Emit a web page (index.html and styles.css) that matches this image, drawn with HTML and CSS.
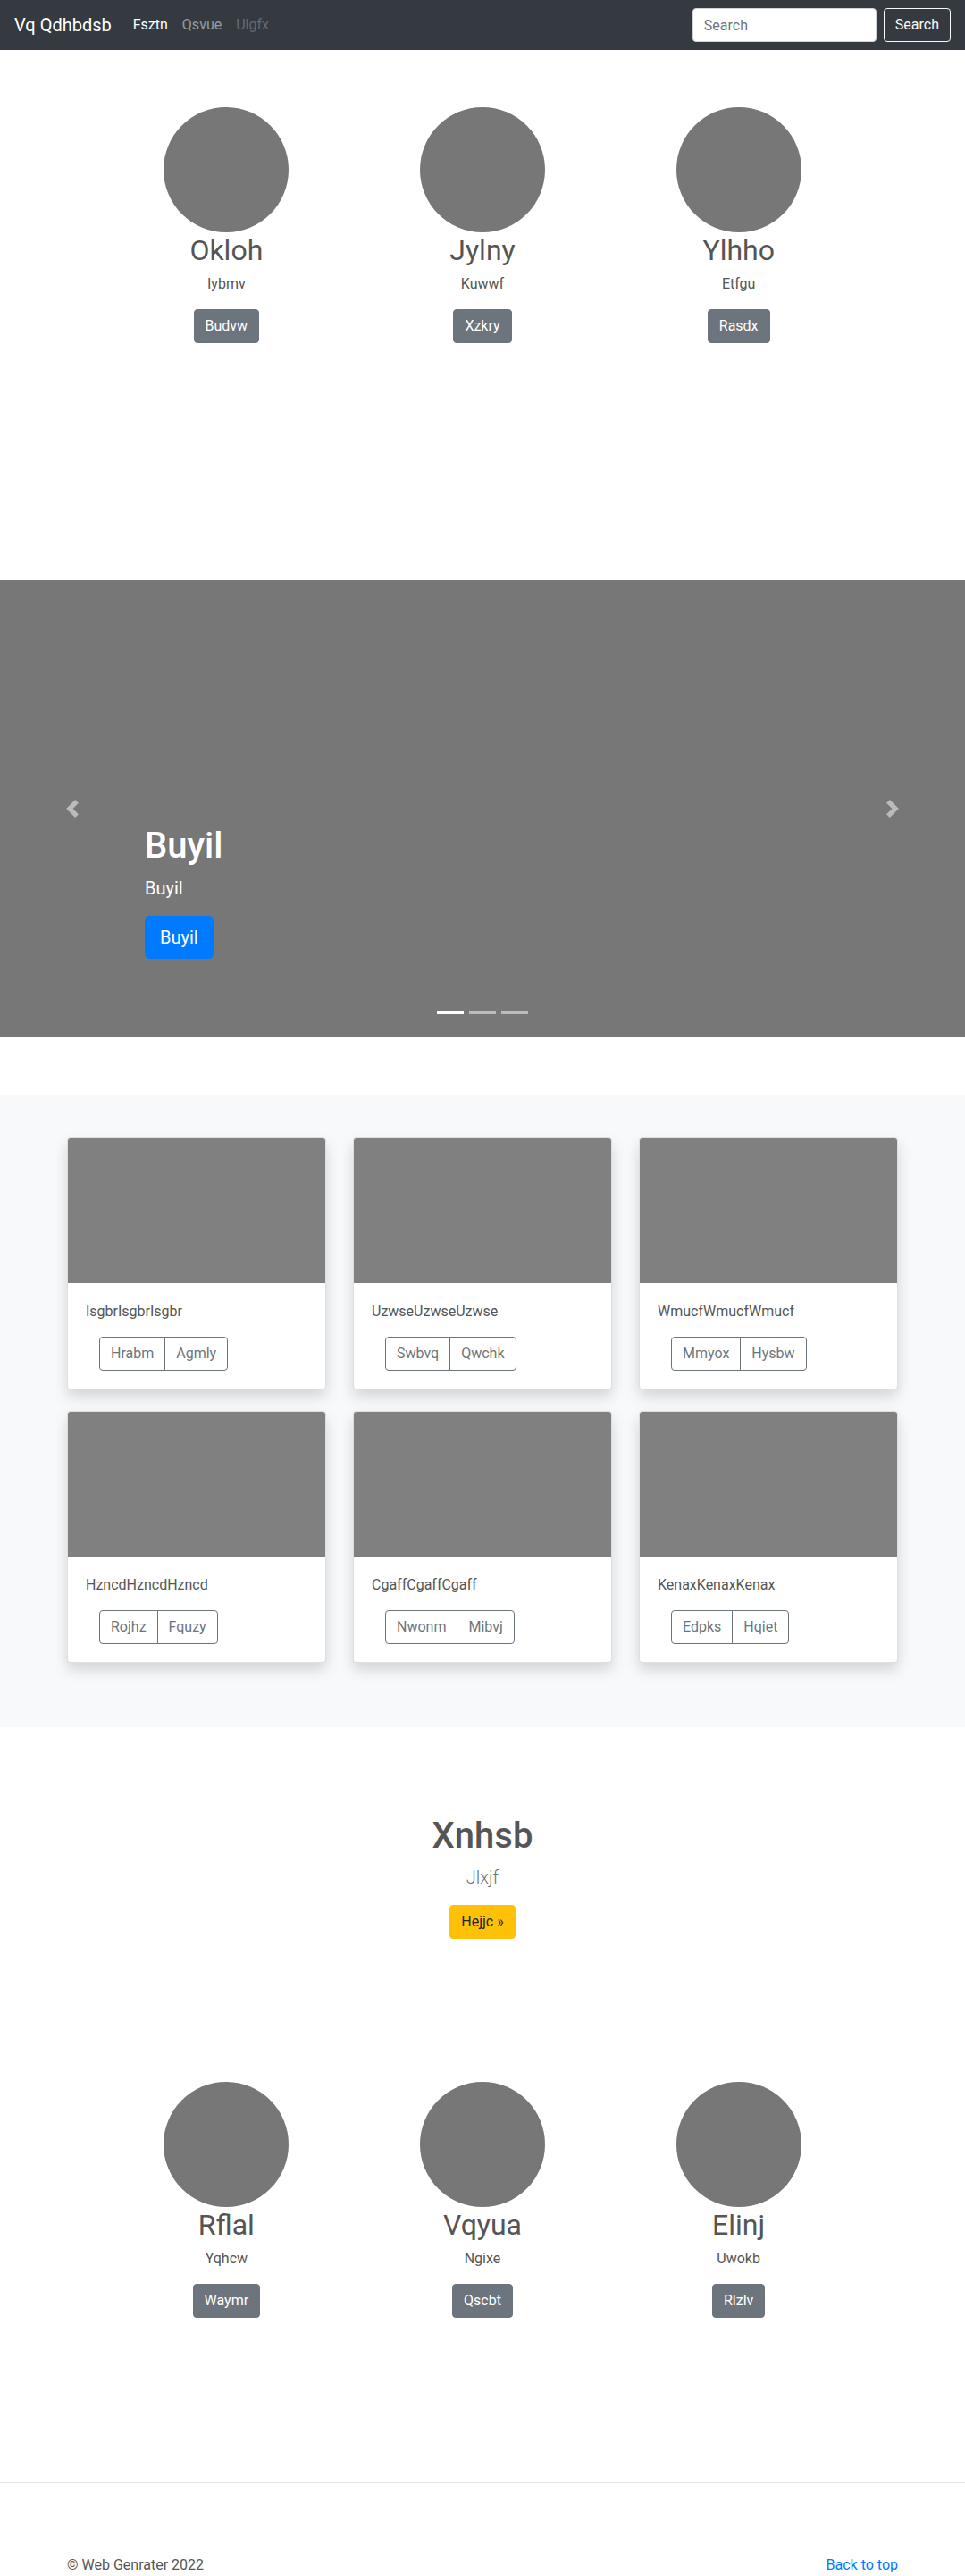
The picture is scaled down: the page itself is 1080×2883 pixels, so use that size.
FILE: index.html
```html
<!DOCTYPE html>
<html lang="en">
<head>
<meta charset="utf-8">
<title>Vq Qdhbdsb</title>
<link rel="stylesheet" href="styles.css">
</head>
<body>
<header class="navbar">
  <a class="brand" href="#">Vq Qdhbdsb</a>
  <ul class="nav">
    <li><a class="nav-link active" href="#">Fsztn</a></li>
    <li><a class="nav-link" href="#">Qsvue</a></li>
    <li><a class="nav-link disabled" href="#">Ulgfx</a></li>
  </ul>
  <form class="search">
    <input class="search-input" type="text" placeholder="Search">
    <button class="btn-outline-light" type="button">Search</button>
  </form>
</header>

<section class="marketing">
  <div class="marketing-row">
    <div class="feature">
      <div class="circle"></div>
      <h2 class="feature-title">Okloh</h2>
      <p class="feature-text">Iybmv</p>
      <a class="btn btn-secondary" href="#">Budvw</a>
    </div>
    <div class="feature">
      <div class="circle"></div>
      <h2 class="feature-title">Jylny</h2>
      <p class="feature-text">Kuwwf</p>
      <a class="btn btn-secondary" href="#">Xzkry</a>
    </div>
    <div class="feature">
      <div class="circle"></div>
      <h2 class="feature-title">Ylhho</h2>
      <p class="feature-text">Etfgu</p>
      <a class="btn btn-secondary" href="#">Rasdx</a>
    </div>
  </div>
</section>

<hr class="divider">

<section class="carousel">
  <a class="carousel-control prev" href="#">
    <svg viewBox="0 0 8 8" width="20" height="20"><path d="M5.25 0l-4 4 4 4 1.5-1.5L4.25 4l2.5-2.5L5.25 0z" fill="#fff"/></svg>
  </a>
  <a class="carousel-control next" href="#">
    <svg viewBox="0 0 8 8" width="20" height="20"><path d="M2.75 0l-1.5 1.5L3.75 4l-2.5 2.5L2.75 8l4-4-4-4z" fill="#fff"/></svg>
  </a>
  <div class="carousel-caption">
    <h1 class="caption-title">Buyil</h1>
    <p class="caption-text">Buyil</p>
    <a class="btn btn-lg btn-primary" href="#">Buyil</a>
  </div>
  <div class="indicators">
    <span class="indicator active"></span>
    <span class="indicator"></span>
    <span class="indicator"></span>
  </div>
</section>

<section class="album">
  <div class="album-grid">
    <div class="card">
      <div class="card-img"></div>
      <div class="card-body">
        <p class="card-text">IsgbrIsgbrIsgbr</p>
        <div class="btn-group"><a class="btn btn-outline" href="#">Hrabm</a><a class="btn btn-outline" href="#">Agmly</a></div>
      </div>
    </div>
    <div class="card">
      <div class="card-img"></div>
      <div class="card-body">
        <p class="card-text">UzwseUzwseUzwse</p>
        <div class="btn-group"><a class="btn btn-outline" href="#">Swbvq</a><a class="btn btn-outline" href="#">Qwchk</a></div>
      </div>
    </div>
    <div class="card">
      <div class="card-img"></div>
      <div class="card-body">
        <p class="card-text">WmucfWmucfWmucf</p>
        <div class="btn-group"><a class="btn btn-outline" href="#">Mmyox</a><a class="btn btn-outline" href="#">Hysbw</a></div>
      </div>
    </div>
    <div class="card">
      <div class="card-img"></div>
      <div class="card-body">
        <p class="card-text">HzncdHzncdHzncd</p>
        <div class="btn-group"><a class="btn btn-outline" href="#">Rojhz</a><a class="btn btn-outline" href="#">Fquzy</a></div>
      </div>
    </div>
    <div class="card">
      <div class="card-img"></div>
      <div class="card-body">
        <p class="card-text">CgaffCgaffCgaff</p>
        <div class="btn-group"><a class="btn btn-outline" href="#">Nwonm</a><a class="btn btn-outline" href="#">Mibvj</a></div>
      </div>
    </div>
    <div class="card">
      <div class="card-img"></div>
      <div class="card-body">
        <p class="card-text">KenaxKenaxKenax</p>
        <div class="btn-group"><a class="btn btn-outline" href="#">Edpks</a><a class="btn btn-outline" href="#">Hqiet</a></div>
      </div>
    </div>
  </div>
</section>

<section class="jumbotron">
  <h1 class="jumbo-title">Xnhsb</h1>
  <p class="lead">Jlxjf</p>
  <a class="btn btn-warning" href="#">Hejjc »</a>
</section>

<section class="marketing">
  <div class="marketing-row">
    <div class="feature">
      <div class="circle"></div>
      <h2 class="feature-title">Rflal</h2>
      <p class="feature-text">Yqhcw</p>
      <a class="btn btn-secondary" href="#">Waymr</a>
    </div>
    <div class="feature">
      <div class="circle"></div>
      <h2 class="feature-title">Vqyua</h2>
      <p class="feature-text">Ngixe</p>
      <a class="btn btn-secondary" href="#">Qscbt</a>
    </div>
    <div class="feature">
      <div class="circle"></div>
      <h2 class="feature-title">Elinj</h2>
      <p class="feature-text">Uwokb</p>
      <a class="btn btn-secondary" href="#">Rlzlv</a>
    </div>
  </div>
</section>

<hr class="divider">

<footer class="footer">
  <p class="copyright">© Web Genrater 2022</p>
  <a class="back-top" href="#">Back to top</a>
</footer>
</body>
</html>
```

FILE: styles.css
```css
* { box-sizing: border-box; }

body {
  margin: 0;
  font-family: Roboto, "Liberation Sans", sans-serif;
  font-size: 16px;
  line-height: 1.5;
  color: #555;
  background: #fff;
}

a { text-decoration: none; }

/* navbar */
.navbar {
  display: flex;
  align-items: center;
  height: 56px;
  padding: 8px 16px;
  background: #343a40;
}
.brand {
  font-size: 20px;
  line-height: 30px;
  color: #fff;
  margin-right: 16px;
}
.nav {
  display: flex;
  list-style: none;
  margin: 0;
  padding: 0;
  flex: 1;
}
.nav-link {
  display: block;
  padding: 8px;
  color: rgba(255,255,255,.5);
}
.nav-link.active { color: #fff; }
.nav-link.disabled { color: rgba(255,255,255,.25); }

.search { display: flex; align-items: center; }
.search-input {
  width: 206px;
  height: 38px;
  padding: 6px 12px;
  margin-right: 8px;
  font: inherit;
  color: #495057;
  background: #fff;
  border: 1px solid #ced4da;
  border-radius: 4px;
}
.search-input::placeholder { color: #6c757d; }
.btn-outline-light {
  height: 38px;
  padding: 6px 12px;
  font: inherit;
  color: #f8f9fa;
  background: transparent;
  border: 1px solid #f8f9fa;
  border-radius: 4px;
}

/* buttons */
.btn {
  display: inline-block;
  padding: 6px 12px;
  font-size: 16px;
  line-height: 24px;
  border: 1px solid transparent;
  border-radius: 4px;
  text-align: center;
}
.btn-secondary { background: #6c757d; border-color: #6c757d; color: #fff; }
.btn-primary { background: #007bff; border-color: #007bff; color: #fff; }
.btn-warning { background: #ffc107; border-color: #ffc107; color: #212529; }
.btn-lg { padding: 8px 16px; font-size: 20px; line-height: 30px; border-radius: 5px; }
.btn-outline { color: #6c757d; border-color: #6c757d; background: transparent; }

/* marketing */
.marketing {
  padding: 64px 0 104px;
}
.marketing-row {
  width: 860px;
  margin: 0 auto;
  display: grid;
  grid-template-columns: repeat(3, 1fr);
}
.feature {
  display: flex;
  flex-direction: column;
  align-items: center;
  text-align: center;
}
.circle {
  width: 140px;
  height: 140px;
  border-radius: 50%;
  background: #777;
}
.feature-title {
  margin: 0 0 6px;
  font-size: 32px;
  line-height: 40px;
  font-weight: 400;
}
.feature-text {
  margin: 0 0 16px;
}

.divider {
  margin: 80px 0;
  border: 0;
  border-top: 1px solid rgba(0,0,0,.1);
  height: 0;
}

/* carousel */
.carousel {
  position: relative;
  height: 512px;
  background: #777;
  margin-bottom: 64px;
}
.carousel-control {
  position: absolute;
  top: 0;
  bottom: 0;
  width: 15%;
  display: flex;
  align-items: center;
  justify-content: center;
  opacity: .5;
}
.carousel-control.prev { left: 0; }
.carousel-control.next { right: 0; }
.carousel-caption {
  position: absolute;
  left: 15%;
  right: 15%;
  bottom: 88px;
  color: #fff;
}
.caption-title {
  margin: 0 0 8px;
  font-size: 40px;
  line-height: 48px;
  font-weight: 500;
}
.caption-text {
  margin: 0 0 16px;
  font-size: 20px;
  line-height: 30px;
}
.indicators {
  position: absolute;
  left: 0;
  right: 0;
  bottom: 26px;
  display: flex;
  justify-content: center;
}
.indicator {
  width: 30px;
  height: 3px;
  margin: 0 3px;
  background: #fff;
  opacity: .5;
}
.indicator.active { opacity: 1; }

/* album */
.album {
  background: #f8f9fa;
  padding: 48px 0;
}
.album-grid {
  width: 960px;
  margin: 0 auto;
  padding: 0 15px;
  display: grid;
  grid-template-columns: repeat(3, 1fr);
  column-gap: 30px;
}
.card {
  background: #fff;
  border: 1px solid rgba(0,0,0,.125);
  border-radius: 4px;
  box-shadow: 0 8px 16px rgba(0,0,0,.15);
  margin-bottom: 24px;
  overflow: hidden;
}
.card-img {
  height: 162px;
  background: #808080;
}
.card-body {
  padding: 20px;
}
.card-text {
  margin: 0 0 16px;
}
.btn-group {
  display: inline-flex;
  margin-left: 15px;
}
.btn-group .btn + .btn {
  margin-left: -1px;
  border-top-left-radius: 0;
  border-bottom-left-radius: 0;
}
.btn-group .btn:first-child {
  border-top-right-radius: 0;
  border-bottom-right-radius: 0;
}

/* jumbotron */
.jumbotron {
  text-align: center;
  padding: 98px 0 96px;
}
.jumbo-title {
  margin: 0 0 7px;
  font-size: 40px;
  line-height: 48px;
  font-weight: 500;
}
.lead {
  margin: 0 0 16px;
  font-size: 20px;
  line-height: 30px;
  font-weight: 300;
  color: #6c757d;
}

/* footer */
.footer {
  width: 960px;
  margin: 0 auto;
  padding: 0 15px;
  display: flex;
  justify-content: space-between;
  align-items: flex-start;
}
.footer p { margin: 0 0 16px; }
.back-top { color: #007bff; }
```
